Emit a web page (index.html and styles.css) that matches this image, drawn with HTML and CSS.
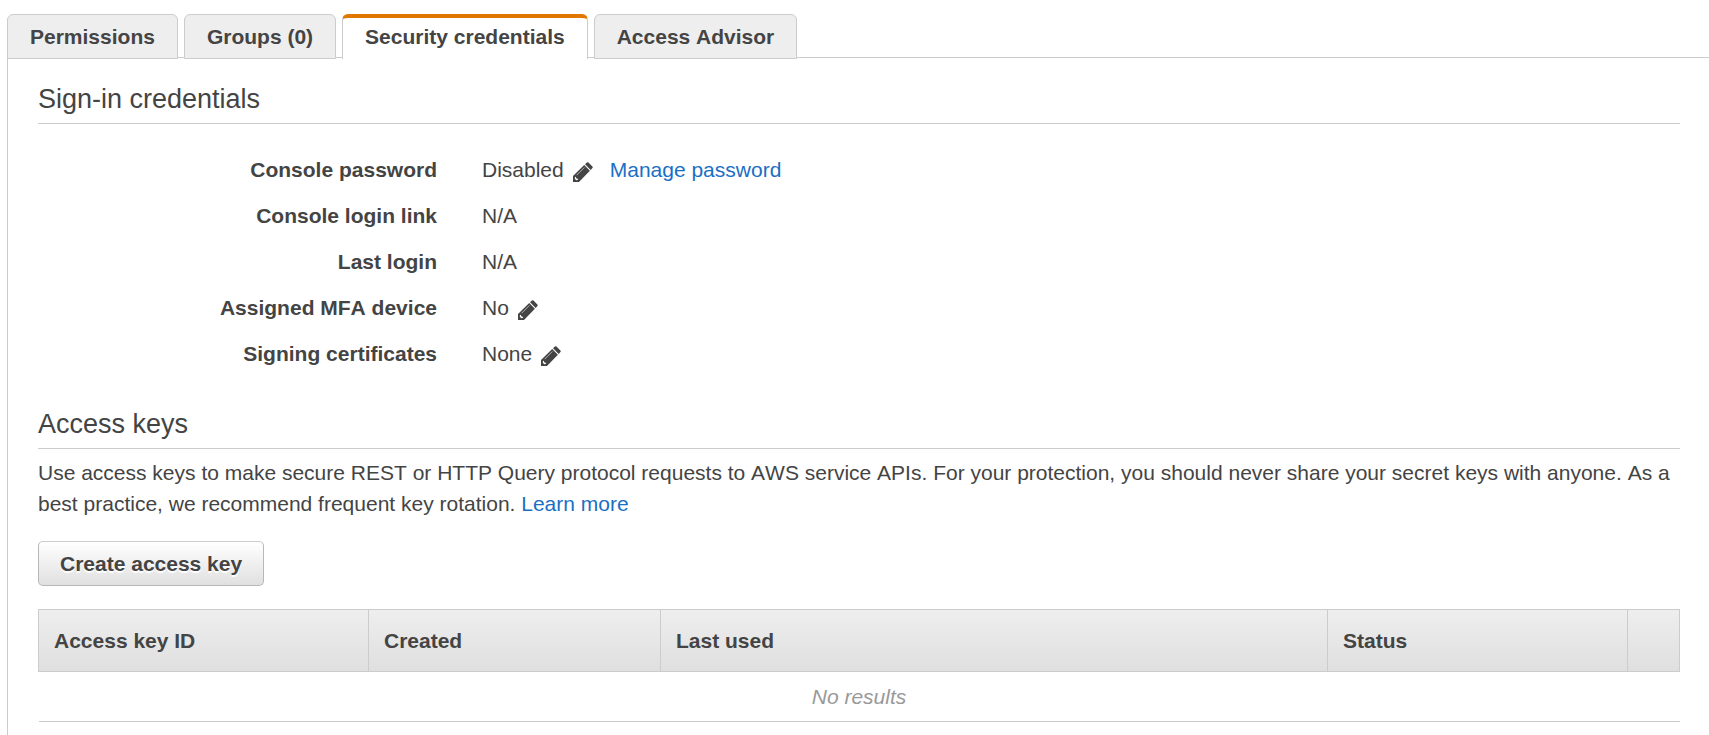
FILE: index.html
```html
<!DOCTYPE html>
<html lang="en">
<head>
<meta charset="utf-8">
<title>Security credentials</title>
<link rel="stylesheet" href="styles.css">
</head>
<body>
<svg class="sprite" aria-hidden="true">
  <symbol id="pencil" viewBox="0 0 20 20">
    <path fill="currentColor" d="M0 14 L11.2 3.1 L16.9 8.8 L6 20 H0 Z M12 2.3 L13.9 .6 Q14.7 -.1 15.5 .6 L19.4 4.5 Q20.1 5.3 19.4 6.1 L17.7 8 Z"/>
    <path fill="none" stroke="#ccc" stroke-width=".8" d="M3.6 13.2 L11.4 5.4"/>
    <path fill="#fff" d="M1.9 15.4 L2.6 14.6 L3.2 16.3 L5.2 17 L4.6 18 L3.3 18.3 L1.8 16.8 Z"/>
  </symbol>
</svg>
<nav class="tabs" role="tablist">
  <button class="tab" role="tab" type="button" aria-selected="false">Permissions</button>
  <button class="tab" role="tab" type="button" aria-selected="false">Groups (0)</button>
  <button class="tab tab-active" role="tab" type="button" aria-selected="true">Security credentials</button>
  <button class="tab" role="tab" type="button" aria-selected="false">Access Advisor</button>
</nav>
<main class="panel">
  <section>
    <h2 class="heading">Sign-in credentials</h2>
    <dl class="details">
      <dt>Console password</dt>
      <dd>Disabled <button class="edit" type="button" aria-label="Edit console password"><svg class="icon"><use href="#pencil"/></svg></button><a class="link manage" href="#">Manage password</a></dd>
      <dt>Console login link</dt>
      <dd>N/A</dd>
      <dt>Last login</dt>
      <dd>N/A</dd>
      <dt>Assigned MFA device</dt>
      <dd>No <button class="edit" type="button" aria-label="Edit MFA device"><svg class="icon"><use href="#pencil"/></svg></button></dd>
      <dt>Signing certificates</dt>
      <dd>None <button class="edit" type="button" aria-label="Edit signing certificates"><svg class="icon"><use href="#pencil"/></svg></button></dd>
    </dl>
  </section>
  <section>
    <h2 class="heading">Access keys</h2>
    <p class="description">Use access keys to make secure REST or HTTP Query protocol requests to AWS service APIs. For your protection, you should never share your secret keys with anyone. As a best practice, we recommend frequent key rotation. <a class="link" href="#">Learn more</a></p>
    <button class="create" type="button">Create access key</button>
    <table class="keys">
      <colgroup>
        <col class="col-id"><col class="col-created"><col><col class="col-status"><col class="col-actions">
      </colgroup>
      <thead>
        <tr><th>Access key ID</th><th>Created</th><th>Last used</th><th>Status</th><th></th></tr>
      </thead>
      <tbody>
        <tr><td class="empty" colspan="5">No results</td></tr>
      </tbody>
    </table>
  </section>
</main>
</body>
</html>
```
FILE: styles.css
```css
* {
  box-sizing: border-box;
}

html {
  overflow: hidden;
}

body {
  display: flex;
  flex-direction: column;
  min-height: 100vh;
  margin: 0;
  padding: 14px 0 0 7px;
  background: #fff;
  color: #444;
  font-family: "Liberation Sans", Arial, sans-serif;
  font-size: 21px;
  font-kerning: none;
  line-height: 31px;
}

button {
  font: inherit;
  font-kerning: none;
  color: inherit;
}

.sprite {
  position: absolute;
  width: 0;
  height: 0;
}

.tabs {
  display: flex;
  gap: 6px;
  margin-bottom: -2px;
  z-index: 1;
}

.tab {
  height: 45px;
  padding: 0 22px;
  border: 1px solid #ccc;
  border-radius: 6px 6px 0 0;
  background: #eee;
  font-weight: bold;
}

.tab-active {
  padding-bottom: 4px;
  border-top: 4px solid #e17700;
  border-bottom: 0;
  background: #fff;
}

.panel {
  flex: 1;
  padding: 25px 29px 0 30px;
  border: solid #ccc;
  border-width: 1px 0 0 1px;
}

.heading {
  margin: 0;
  padding-bottom: 7px;
  border-bottom: 1px solid #ccc;
  font-size: 27px;
  font-weight: normal;
  line-height: 33px;
}

.details {
  display: grid;
  grid-template-columns: 399px 1fr;
  gap: 15px 45px;
  margin: 0;
  padding: 30px 0 39px;
}

.details dt {
  font-weight: bold;
  text-align: right;
}

.details dd {
  display: flex;
  align-items: center;
  gap: 9px;
  margin: 0;
}

.edit {
  padding: 4px 0 0;
  border: 0;
  background: none;
  line-height: 0;
}

.icon {
  width: 20px;
  height: 20px;
}

.manage {
  margin-left: 8px;
}

.link {
  color: #1a6fc4;
  text-decoration: none;
}

.description {
  margin: 8px 0 22px;
}

.create {
  height: 45px;
  padding: 0 21px;
  border: 1px solid #b7b7b7;
  border-top-color: #ccc;
  border-radius: 5px;
  background: linear-gradient(#fff, #e0e0e0);
  font-weight: bold;
  text-shadow: 0 2px 1px #fff;
}

.keys {
  width: 100%;
  margin-top: 23px;
  border-collapse: collapse;
  table-layout: fixed;
}

.keys thead tr {
  background: linear-gradient(#eee, #dfdfdf);
}

.keys th {
  height: 62px;
  padding: 0 15px;
  border: 1px solid #ccc;
  text-align: left;
}

.col-id {
  width: 330px;
}

.col-created {
  width: 292px;
}

.col-status {
  width: 300px;
}

.col-actions {
  width: 52px;
}

.empty {
  height: 50px;
  padding: 0;
  border-bottom: 1px solid #ccc;
  color: #999;
  font-style: italic;
  text-align: center;
}
```
